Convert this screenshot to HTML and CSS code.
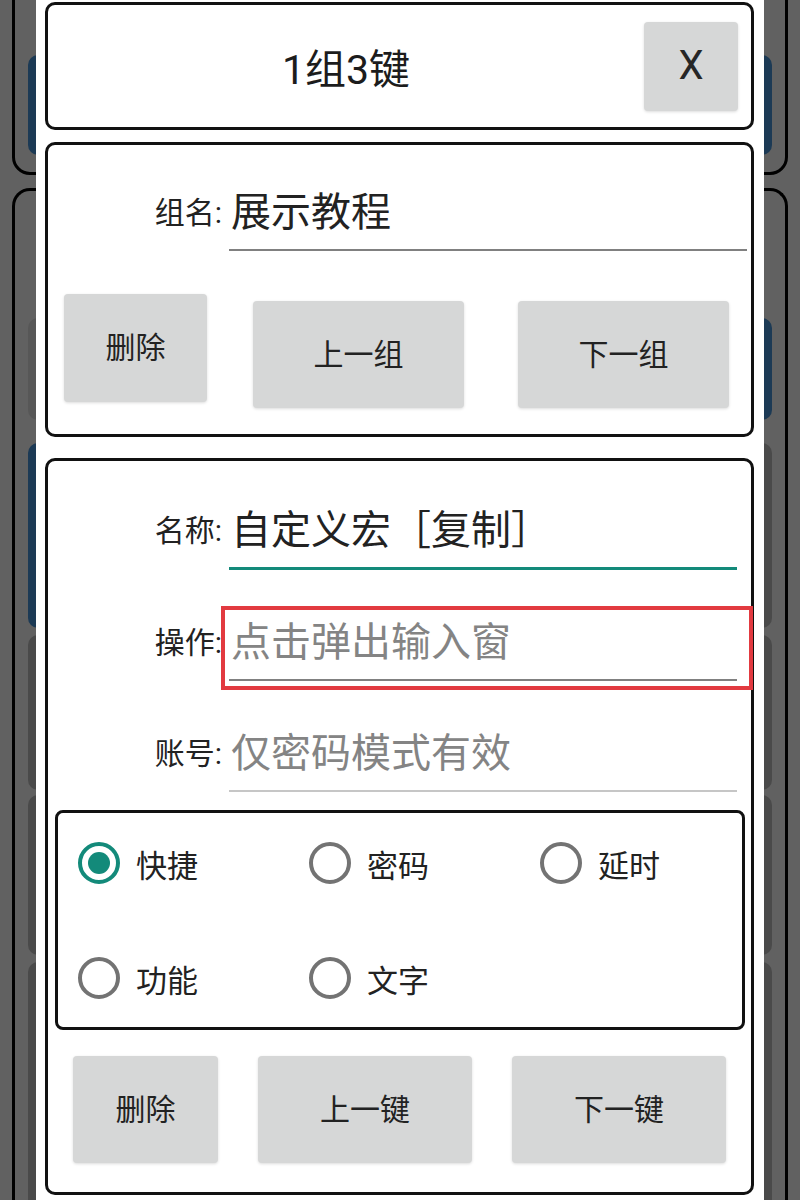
FILE: index.html
```html
<!DOCTYPE html>
<html lang="zh-CN">
<head>
<meta charset="utf-8">
<title>按键设置</title>
<link rel="stylesheet" href="styles.css">
</head>
<body>
<div class="app">
  <section class="bg-card bg-card-top">
    <div class="bg-row row-top"><span class="blk blue"></span><span class="blk blue"></span></div>
  </section>
  <section class="bg-card bg-card-main">
    <div class="bg-row row-a"><span class="blk mid"></span><span class="blk blue"></span></div>
    <div class="bg-row row-b"><span class="blk blue"></span><span class="blk dark"></span></div>
    <div class="bg-row row-c"><span class="blk dark"></span><span class="blk dark"></span></div>
    <div class="bg-row row-d"><span class="blk dark"></span><span class="blk dark"></span></div>
    <div class="bg-row row-e"><span class="blk dark"></span><span class="blk dark"></span></div>
  </section>
</div>

<div class="dialog">
  <header class="card head-card">
    <h1 class="title">1组3键</h1>
    <button class="btn close-btn">X</button>
  </header>

  <section class="card group-card">
    <div class="field-row">
      <span class="label">组名:</span>
      <div class="field plain"><span class="value">展示教程</span></div>
    </div>
    <div class="btn-row group-btns">
      <button class="btn del">删除</button>
      <button class="btn prev">上一组</button>
      <button class="btn next">下一组</button>
    </div>
  </section>

  <section class="card key-card">
    <div class="field-row">
      <span class="label">名称:</span>
      <div class="field focused"><span class="value">自定义宏［复制］</span></div>
    </div>
    <div class="field-row op-row">
      <span class="label">操作:</span>
      <div class="field plain marked"><span class="value hint">点击弹出输入窗</span></div>
    </div>
    <div class="field-row acc-row">
      <span class="label">账号:</span>
      <div class="field light"><span class="value hint">仅密码模式有效</span></div>
    </div>

    <div class="radio-box">
      <label class="radio checked"><span class="dot"></span><span class="rlabel">快捷</span></label>
      <label class="radio"><span class="dot"></span><span class="rlabel">密码</span></label>
      <label class="radio"><span class="dot"></span><span class="rlabel">延时</span></label>
      <label class="radio"><span class="dot"></span><span class="rlabel">功能</span></label>
      <label class="radio"><span class="dot"></span><span class="rlabel">文字</span></label>
    </div>

    <div class="btn-row key-btns">
      <button class="btn del">删除</button>
      <button class="btn prev">上一键</button>
      <button class="btn next">下一键</button>
    </div>
  </section>
</div>
</body>
</html>
```

FILE: styles.css
```css
* {
  box-sizing: border-box;
}

html,
body {
  margin: 0;
  height: 1200px;
  overflow: hidden;
}

body {
  position: relative;
  background: #616161;
  font-family: Roboto, "Noto Sans CJK SC", sans-serif;
  color: #222;
}

/* dimmed page behind the dialog */
.app {
  display: flex;
  flex-direction: column;
  gap: 13px;
  padding: 0 12px;
}

.bg-card {
  border: 3px solid #000;
  border-radius: 18px;
  padding: 0 13px;
}

.bg-card-top {
  margin-top: -40px;
  height: 215px;
  padding-top: 92px;
}

.bg-card-main {
  height: 1012px;
  border-bottom-width: 0;
  border-bottom-left-radius: 0;
  border-bottom-right-radius: 0;
  padding-top: 127px;
}

.bg-row {
  display: flex;
  justify-content: space-between;
}

.blk {
  width: 330px;
  border-radius: 10px;
}

.blk.blue { background: #1c3a55; }
.blk.dark { background: #4a4a4a; }
.blk.mid { background: #575757; }

.row-top { height: 100px; }
.row-a { height: 102px; }
.row-b { height: 185px; margin-top: 23px; }
.row-c { height: 155px; margin-top: 7px; }
.row-d { height: 160px; margin-top: 5px; }
.row-e { height: 238px; margin-top: 7px; border-bottom-left-radius: 0; }
.row-e .blk { border-bottom-left-radius: 0; border-bottom-right-radius: 0; }

/* dialog */
.dialog {
  position: absolute;
  left: 36px;
  top: 0;
  width: 728px;
  height: 1200px;
  background: #fff;
  padding: 2px 10px 0 9px;
}

.card {
  border: 3px solid #111;
  border-radius: 10px;
  background: #fff;
}

.btn {
  font-family: Roboto, "Noto Sans CJK SC", sans-serif;
  font-size: 30px;
  color: #222;
  background: #d6d7d7;
  border: 0;
  border-radius: 4px;
  box-shadow: 0 1px 3px rgba(0, 0, 0, 0.14);
  padding: 0;
  line-height: 1;
}

.head-card {
  height: 128px;
  display: flex;
  align-items: center;
  padding-right: 13px;
}

.title {
  flex: 1;
  margin: 0;
  text-align: center;
  font-size: 41px;
  font-weight: 400;
  color: #1c1c1c;
}

.close-btn {
  width: 94px;
  height: 89px;
  font-size: 40px;
  color: #262626;
}

.group-card {
  margin-top: 12px;
  height: 295px;
  padding: 44px 4px 0 0;
}

.field-row {
  display: flex;
  align-items: flex-start;
}

.label {
  width: 174px;
  text-align: right;
  font-size: 30px;
  line-height: 48px;
  color: #222;
}

.field {
  flex: 1;
  margin-left: 7px;
  padding: 0 0 12px 2px;
  position: relative;
}

.field.plain { border-bottom: 2px solid #808080; }
.field.light { border-bottom: 2px solid #c6c6c6; }
.field.focused { border-bottom: 3px solid #138a7a; }

/* highlight frame drawn over the action field */
.field.marked::after {
  content: "";
  position: absolute;
  left: -8px;
  top: -13px;
  right: -16px;
  bottom: -11px;
  border: 4px solid #e23a40;
}

.value {
  display: block;
  font-size: 40px;
  line-height: 48px;
  color: #222;
  white-space: nowrap;
}

.value.hint {
  color: #848484;
}

.btn-row {
  display: flex;
  align-items: flex-start;
}

.group-btns {
  margin-top: 43px;
}

.group-btns .del {
  margin-left: 16px;
  width: 143px;
  height: 108px;
}

.group-btns .prev {
  margin: 7px 0 0 46px;
  width: 211px;
  height: 107px;
}

.group-btns .next {
  margin: 7px 0 0 54px;
  width: 211px;
  height: 107px;
}

.key-card {
  margin-top: 21px;
  height: 737px;
  padding-top: 46px;
}

.key-card .field-row {
  padding-right: 14px;
}

.op-row {
  margin-top: 49px;
}

.acc-row {
  margin-top: 49px;
}

.radio-box {
  margin: 18px 6px 0 7px;
  height: 220px;
  border: 3px solid #111;
  border-radius: 8px;
  padding: 13px 0 0 20px;
  display: grid;
  grid-template-columns: 231px 231px 1fr;
  grid-auto-rows: 74px;
  row-gap: 41px;
}

.radio {
  display: flex;
  align-items: center;
}

.dot {
  width: 42px;
  height: 42px;
  border: 4px solid #737373;
  border-radius: 50%;
  margin-right: 16px;
  display: flex;
  align-items: center;
  justify-content: center;
  flex: none;
}

.radio.checked .dot {
  border-color: #138a7a;
}

.radio.checked .dot::after {
  content: "";
  width: 22px;
  height: 22px;
  border-radius: 50%;
  background: #138a7a;
}

.rlabel {
  font-size: 31px;
  color: #222;
}

.key-btns {
  margin-top: 26px;
}

.key-btns .del {
  margin-left: 25px;
  width: 145px;
  height: 107px;
}

.key-btns .prev {
  margin-left: 40px;
  width: 214px;
  height: 107px;
}

.key-btns .next {
  margin-left: 40px;
  width: 214px;
  height: 107px;
}
```
